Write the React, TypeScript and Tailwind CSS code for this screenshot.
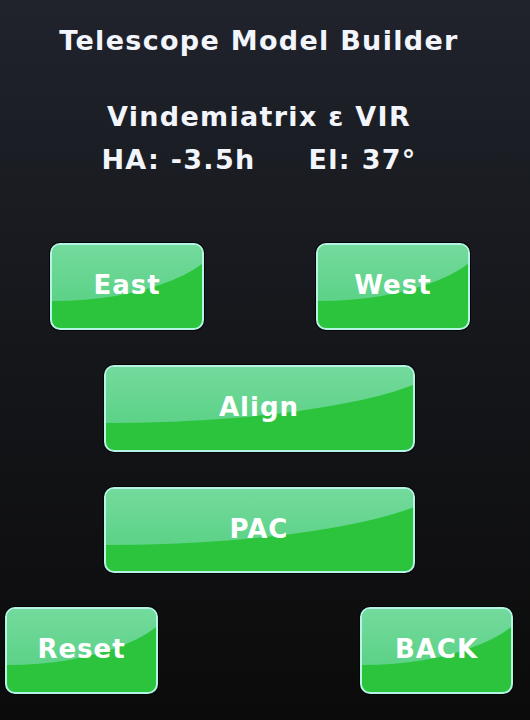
function GlossButton({ label, className }: { label: string; className: string }) {
  return (
    <button
      className={`relative flex items-center justify-center overflow-hidden rounded-[10px] border-2 border-[#b4f3e6] bg-[#2cc43d] pb-[3px] shadow-[0_0_0_1px_#060606] ${className}`}
    >
      {/* glossy highlight */}
      <span className="absolute left-[-114%] top-[-102%] h-[170%] w-[227%] rounded-[50%] bg-gradient-to-b from-[#b8f4e8]/75 to-[#84ddc4]/55" />
      <span className="relative font-['DejaVu_Sans',sans-serif] text-[26px] font-bold leading-none tracking-[1px] text-white">
        {label}
      </span>
    </button>
  );
}

export default function App() {
  return (
    <div className="flex min-h-[720px] w-[530px] flex-col bg-gradient-to-b from-[#20232c] via-[#15161a] to-[#0b0b0b] pl-[5px] pr-[17px] pt-[27px] font-['DejaVu_Sans',sans-serif] font-bold text-[#f2f5fb]">
      {/* Header */}
      <h1 className="text-center text-[27px] leading-[27px] tracking-[1.3px]">
        Telescope Model Builder
      </h1>
      <p className="mt-[49px] text-center text-[27px] leading-[27px] tracking-[1.3px]">
        Vindemiatrix ε VIR
      </p>
      <div className="mt-[16px] flex justify-center gap-[53px] text-[27px] leading-[27px] tracking-[1.3px]">
        <span>HA: -3.5h</span>
        <span>El: 37°</span>
      </div>

      {/* Buttons */}
      <div className="mt-[70px] flex justify-between pl-[45px] pr-[43px]">
        <GlossButton label="East" className="h-[87px] w-[154px]" />
        <GlossButton label="West" className="h-[87px] w-[154px]" />
      </div>
      <GlossButton label="Align" className="mx-auto mt-[35px] h-[87px] w-[311px]" />
      <GlossButton label="PAC" className="mx-auto mt-[35px] h-[86px] w-[311px]" />
      <div className="mt-[34px] flex justify-between">
        <GlossButton label="Reset" className="h-[87px] w-[153px]" />
        <GlossButton label="BACK" className="h-[87px] w-[153px]" />
      </div>
    </div>
  );
}
